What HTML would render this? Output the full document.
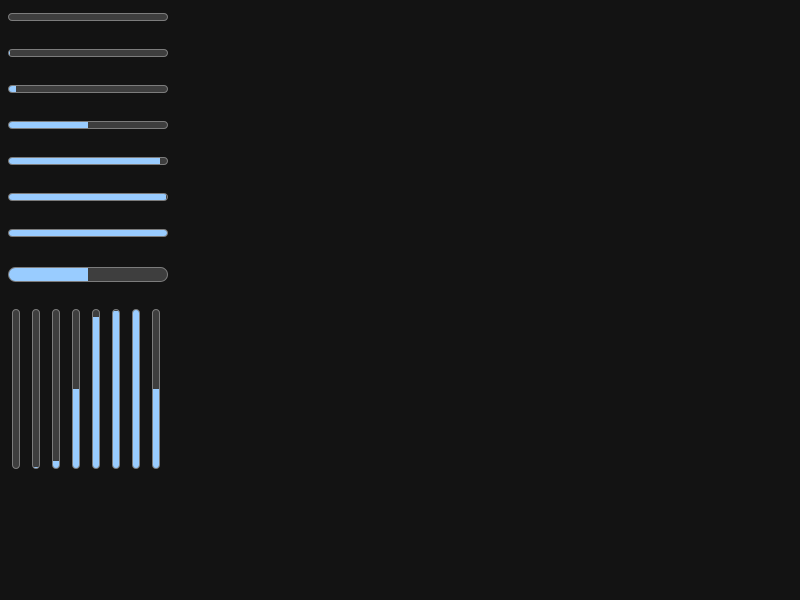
<!DOCTYPE html>
<html><head><style>
html,body{margin:0;padding:0;background:#131313;width:800px;height:600px;overflow:hidden}
.h{position:absolute;left:8px;width:158px;height:6px;background:#3e3e3e;border:1px solid #7c7c7c;border-radius:4px;overflow:hidden}
.h i{position:absolute;left:0;top:0;bottom:0;background:#99ccff}
.v{position:absolute;top:309px;width:6px;height:158px;background:#3e3e3e;border:1px solid #7c7c7c;border-radius:4px;overflow:hidden}
.v i{position:absolute;left:0;right:0;bottom:0;background:#99ccff}
</style></head><body>
<div class="h" style="top:13px"><i style="width:0"></i></div>
<div class="h" style="top:49px"><i style="width:1px"></i></div>
<div class="h" style="top:85px"><i style="width:7px"></i></div>
<div class="h" style="top:121px"><i style="width:79px"></i></div>
<div class="h" style="top:157px"><i style="width:151px"></i></div>
<div class="h" style="top:193px"><i style="width:157px"></i></div>
<div class="h" style="top:229px"><i style="width:158px"></i></div>
<div class="h" style="top:267px;height:13px;border-radius:8px"><i style="width:79px"></i></div>
<div class="v" style="left:12px"><i style="height:0"></i></div>
<div class="v" style="left:32px"><i style="height:1px"></i></div>
<div class="v" style="left:52px"><i style="height:7px"></i></div>
<div class="v" style="left:72px"><i style="height:79px"></i></div>
<div class="v" style="left:92px"><i style="height:151px"></i></div>
<div class="v" style="left:112px"><i style="height:157px"></i></div>
<div class="v" style="left:132px"><i style="height:158px"></i></div>
<div class="v" style="left:152px"><i style="height:79px"></i></div>
</body></html>
